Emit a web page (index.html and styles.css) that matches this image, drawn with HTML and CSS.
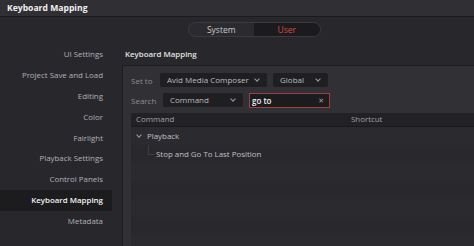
FILE: index.html
```html
<!DOCTYPE html>
<html lang="en">
<head>
  <meta charset="UTF-8">
  <title>Keyboard Mapping</title>
  <link rel="stylesheet" href="styles.css">
</head>
<body>
  <div class="titlebar">Keyboard Mapping</div>

  <div class="toggle-row">
    <div class="toggle">
      <span class="toggle-item">System</span>
      <span class="toggle-item active">User</span>
    </div>
  </div>

  <div class="content">
    <ul class="sidebar">
      <li>UI Settings</li>
      <li>Project Save and Load</li>
      <li>Editing</li>
      <li>Color</li>
      <li>Fairlight</li>
      <li>Playback Settings</li>
      <li>Control Panels</li>
      <li class="selected">Keyboard Mapping</li>
      <li>Metadata</li>
    </ul>

    <div class="main">
      <h2>Keyboard Mapping</h2>
      <div class="panel">
        <div class="field-row">
          <span class="field-label">Set to</span>
          <div class="dropdown preset">Avid Media Composer <span class="chev"></span></div>
          <div class="dropdown scope">Global <span class="chev"></span></div>
        </div>
        <div class="field-row">
          <span class="field-label">Search</span>
          <div class="dropdown kind">Command <span class="chev"></span></div>
          <div class="search">
            <span class="search-text">go to</span>
            <span class="clear">&#x2715;</span>
          </div>
        </div>

        <div class="table">
          <div class="table-head">
            <span class="col-command">Command</span>
            <span class="col-shortcut">Shortcut</span>
          </div>
          <div class="row">
            <span class="chev open"></span>
            <span class="group">Playback</span>
          </div>
          <div class="row child">
            <span class="branch"></span>
            <span>Stop and Go To Last Position</span>
          </div>
          <div class="row"></div>
          <div class="row"></div>
          <div class="row"></div>
          <div class="row"></div>
          <div class="row"></div>
        </div>
      </div>
    </div>
  </div>
</body>
</html>
```

FILE: styles.css
```css
* {
  box-sizing: border-box;
}

body {
  display: flex;
  flex-direction: column;
  margin: 0;
  width: 474px;
  height: 246px;
  overflow: hidden;
  background-color: #28282c;
  font-family: "Open Sans", "DejaVu Sans", sans-serif;
  color: #a9a9ad;
}

.titlebar {
  flex: none;
  height: 17px;
  padding-left: 7px;
  background-color: #303034;
  border-bottom: 1px solid #1b1b1e;
  color: #f0f0f0;
  font-size: 8.6px;
  font-weight: bold;
  line-height: 16px;
}

.toggle-row {
  flex: none;
  display: flex;
  justify-content: center;
  padding-top: 5px;
  padding-left: 34px;
}

.toggle {
  display: flex;
  width: 133px;
  height: 15px;
  border: 1px solid #3a3a3f;
  border-radius: 8px;
  overflow: hidden;
  background-color: #2b2b2f;
}

.toggle-item {
  flex: 1;
  text-align: center;
  font-size: 8.5px;
  line-height: 13px;
  color: #c8c8cc;
}

.toggle-item.active {
  background-color: #1b1b1e;
  color: #dc4646;
}

.content {
  flex: 1;
  min-height: 0;
  display: flex;
  padding-top: 7px;
}

.sidebar {
  list-style: none;
  margin: 0;
  padding: 0;
  width: 112px;
}

.sidebar li {
  height: 20.9px;
  padding-right: 9px;
  text-align: right;
  font-size: 7.9px;
  line-height: 20.9px;
  color: #b0b0b4;
  white-space: nowrap;
}

.sidebar li.selected {
  background-color: #1c1c1f;
  color: #f2f2f2;
  font-weight: 600;
}

.main {
  flex: 1;
  display: flex;
  flex-direction: column;
  min-height: 0;
  margin-left: 10px;
}

.main h2 {
  flex: none;
  margin: 0;
  height: 21px;
  padding-left: 3px;
  font-size: 7.9px;
  font-weight: 600;
  line-height: 20px;
  color: #e0e0e0;
}

.panel {
  flex: 1;
  overflow: hidden;
  background-color: #303035;
  border-top: 1px solid #1d1d20;
  border-left: 1px solid #1d1d20;
  padding: 7px 0 0 8px;
}

.field-row {
  display: flex;
  align-items: center;
  height: 14px;
  margin-bottom: 6px;
  font-size: 8px;
  white-space: nowrap;
}

.field-label {
  width: 29px;
  color: #8e8e93;
}

.dropdown {
  display: flex;
  align-items: center;
  justify-content: space-between;
  height: 14px;
  padding: 0 8px 0 7px;
  background-color: #1f1f22;
  border-radius: 2px;
  color: #bcbcc0;
  line-height: 14px;
}

.preset {
  width: 107px;
}

.scope {
  width: 55px;
  margin-left: 6px;
}

.kind {
  width: 80px;
  margin-left: 3px;
}

.chev {
  width: 4px;
  height: 4px;
  border-right: 1px solid #9a9a9e;
  border-bottom: 1px solid #9a9a9e;
  transform: rotate(45deg);
  margin-top: -2px;
}

.search {
  display: flex;
  align-items: center;
  justify-content: space-between;
  width: 81px;
  height: 15px;
  margin-left: 6px;
  padding: 0 5px 0 2px;
  background-color: #1c1c1f;
  border: 1px solid #9e3f44;
  color: #f4f4f4;
}

.search-text {
  font-weight: 600;
}

.clear {
  font-size: 7px;
  color: #a0a0a4;
}

.table {
  margin-top: 1px;
  font-size: 7.9px;
}

.table-head {
  display: flex;
  height: 14px;
  background-color: #222226;
  border-bottom: 1px solid #19191c;
  line-height: 13px;
  color: #a0a0a4;
}

.col-command {
  width: 220px;
  padding-left: 5px;
}

.row {
  display: flex;
  align-items: center;
  height: 18px;
  background-color: #2b2b2f;
  color: #c0c0c4;
}

.row:nth-child(odd) {
  background-color: #29292d;
}

.row .chev.open {
  margin: -3px 0 0 6px;
}

.group {
  margin-left: 6px;
}

.row.child {
  padding-left: 17px;
}

.branch {
  width: 7px;
  height: 10px;
  margin: -9px 1px 0 0;
  border-left: 1px solid #3c3c41;
  border-bottom: 1px solid #3c3c41;
}
```
